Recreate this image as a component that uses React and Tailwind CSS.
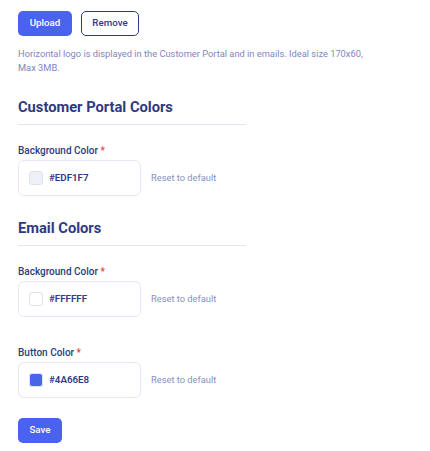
import React from "react";

function ColorField({ label, value, swatch }) {
  return (
    <div>
      <p className="text-[10px] leading-[12px] font-medium text-[#2e3a82]">
        {label} <span className="text-[#ef4444]">*</span>
      </p>
      <div className="flex items-center mt-[3px]">
        <div className="flex items-center w-[123px] h-[36px] border border-[#e6e8f4] rounded-[6px] bg-white pl-[10px]">
          <span
            className="w-[14px] h-[14px] rounded-[3px] border border-[#dfe3ee]"
            style={{ backgroundColor: swatch }}
          ></span>
          <span className="ml-[6px] text-[9.75px] font-semibold text-[#2e3a82]">{value}</span>
        </div>
        <button className="ml-[10px] text-[9.3px] text-[#8a8fc0]">Reset to default</button>
      </div>
    </div>
  );
}

function Section({ title, children }) {
  return (
    <div>
      <h2 className="text-[14.7px] leading-[20px] font-bold text-[#2e3a82]">{title}</h2>
      <div className="w-[228px] h-px bg-[#e4e6ef] mt-[7px]"></div>
      {children}
    </div>
  );
}

export default function App() {
  return (
    <div
      className="bg-white w-[430px] h-[451px] pl-[18px] pt-[11px]"
      style={{ fontFamily: "Roboto, 'Liberation Sans', sans-serif" }}
    >
      <div className="flex gap-[9px]">
        <button className="h-[25px] w-[54px] rounded-[5px] bg-[#4a63ee] text-white text-[9.75px] font-medium">
          Upload
        </button>
        <button className="h-[25px] w-[58px] rounded-[5px] border border-[#2e3a82] text-[#2e3a82] text-[9.75px] font-medium">
          Remove
        </button>
      </div>
      <p className="mt-[11px] w-[360px] text-[9.3px] leading-[14px] text-[#7f86bd]">
        Horizontal logo is displayed in the Customer Portal and in emails. Ideal size 170x60, Max 3MB.
      </p>
      <div className="mt-[22px]">
        <Section title="Customer Portal Colors">
          <div className="mt-[20px]">
            <ColorField label="Background Color" value="#EDF1F7" swatch="#EDF1F7" />
          </div>
        </Section>
      </div>
      <div className="mt-[22px]">
        <Section title="Email Colors">
          <div className="mt-[20px]">
            <ColorField label="Background Color" value="#FFFFFF" swatch="#FFFFFF" />
          </div>
          <div className="mt-[30px]">
            <ColorField label="Button Color" value="#4A66E8" swatch="#4A66E8" />
          </div>
        </Section>
      </div>
      <button className="mt-[20px] h-[25px] w-[44px] rounded-[5px] bg-[#4a63ee] text-white text-[9.75px] font-medium">
        Save
      </button>
    </div>
  );
}
